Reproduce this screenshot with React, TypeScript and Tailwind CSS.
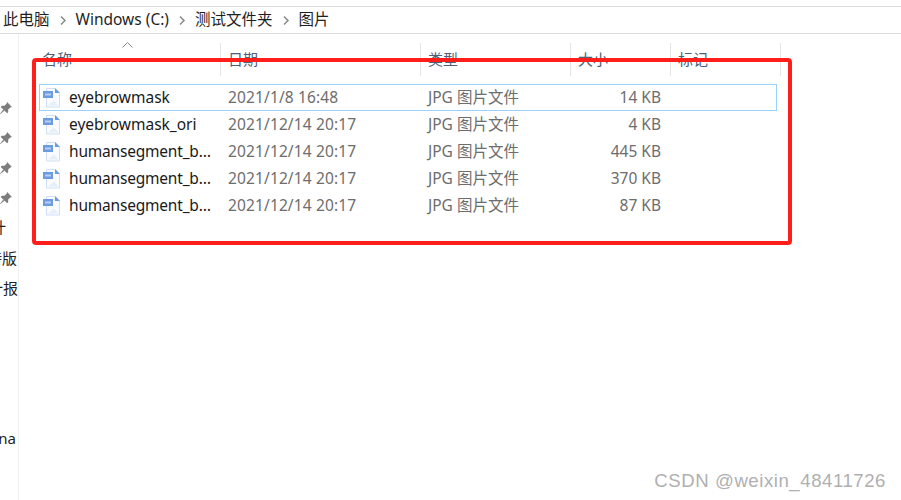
const font = { fontFamily: '"Noto Sans", "Noto Sans CJK SC", sans-serif' };

function FileIcon() {
  return (
    <svg width="20" height="21" viewBox="0 0 20 21" className="shrink-0">
      <path d="M4.5 1.5H13L17.5 6V20H4.5Z" fill="#f9fbfe" stroke="#cfdff4" />
      <path d="M13 1L18 6H13Z" fill="#6b9be2" />
      <path d="M6 18.5L12 13.5L16.5 18.5Z" fill="#e6eff9" />
      <rect x="1" y="4" width="10" height="7" fill="#6b9be2" />
      <rect x="3" y="6.5" width="6" height="2" fill="#b9d0f2" />
    </svg>
  );
}

function Pin() {
  return (
    <svg width="15" height="15" viewBox="0 0 14 14" fill="#7d7d7d">
      <path d="M8.5 1L13 5.5L11.5 6L9.5 8L9.5 10.5L8.5 11.5L2.5 5.5L3.5 4.5L6 4.5L8 2.5Z" />
      <path d="M5 8L1 13L6 9Z" />
    </svg>
  );
}

function Chevron() {
  return (
    <svg width="8" height="11" viewBox="0 0 8 11" fill="none" stroke="#8a8a8a" strokeWidth="1.5" className="mx-[9px]">
      <path d="M2 1.5L6 5.5L2 9.5" />
    </svg>
  );
}

const rows = [
  ["eyebrowmask", "2021/1/8 16:48", "14 KB"],
  ["eyebrowmask_ori", "2021/12/14 20:17", "4 KB"],
  ["humansegment_b…", "2021/12/14 20:17", "445 KB"],
  ["humansegment_b…", "2021/12/14 20:17", "370 KB"],
  ["humansegment_b…", "2021/12/14 20:17", "87 KB"],
];

const headers: [string, string][] = [
  ["名称", "w-[202px]"],
  ["日期", "w-[200px]"],
  ["类型", "w-[150px]"],
  ["大小", "w-[100px]"],
  ["标记", "w-[110px]"],
];

export default function App() {
  return (
    <div className="relative w-[901px] h-[500px] bg-white overflow-hidden pt-[6px]" style={font}>
      <div className="h-[28px] border-y border-[#dcdcdc] flex items-center pl-[3px] text-[15.5px] text-[#1f1f1f]">
        <span>此电脑</span>
        <Chevron />
        <span>Windows (C:)</span>
        <Chevron />
        <span>测试文件夹</span>
        <Chevron />
        <span>图片</span>
      </div>
      <div className="flex h-[466px]">
        <aside className="w-[19px] shrink-0 border-r border-[#f0f0f0] text-[15px] text-[#1f1f1f] relative overflow-hidden">
          <div className="absolute left-[-2px] top-[67px] flex flex-col gap-[15px]">
            <Pin />
            <Pin />
            <Pin />
            <Pin />
          </div>
          <div className="absolute right-[12px] top-[183px] whitespace-nowrap leading-[20px]">计</div>
          <div className="absolute right-[1px] top-[214px] whitespace-nowrap leading-[20px]">特版</div>
          <div className="absolute right-[0px] top-[244px] whitespace-nowrap leading-[20px]">计报</div>
          <div className="absolute right-[2px] top-[394px] whitespace-nowrap leading-[20px]">na</div>
        </aside>
        <main className="flex-1 min-w-0">
          <div className="relative flex mt-[9px] h-[33px] text-[15px] text-[#4c607a]">
            <svg width="11" height="6" viewBox="0 0 11 6" fill="none" stroke="#8a8a8a" className="absolute left-[103px] top-[-1px]">
              <path d="M0.5 5.5L5.5 0.5L10.5 5.5" />
            </svg>
            {headers.map(([label, w], i) => (
              <div key={label} className={`${w} border-r border-[#e5e5e5] flex items-center ${i === 0 ? "pl-[23px]" : "pl-[7px]"}`}>
                {label}
              </div>
            ))}
          </div>
          <div className="ml-[20px] mt-[8px] w-[738px] text-[15.5px] text-[#6d6d6d]">
            {rows.map(([name, date, size], i) => (
              <div
                key={i}
                className={`flex items-center h-[27px] border ${i === 0 ? "border-[#99d1ff]" : "border-transparent"}`}
              >
                <div className="w-[188px] flex items-center pl-[2px] gap-[7px] text-[#1a1a1a]">
                  <FileIcon />
                  <span className={`whitespace-nowrap ${i >= 2 ? "tracking-[-0.2px]" : ""}`}>{name}</span>
                </div>
                <div className="w-[200px] whitespace-nowrap tracking-[0.13px]">{date}</div>
                <div className="w-[150px] whitespace-nowrap">JPG 图片文件</div>
                <div className="w-[83px] text-right whitespace-nowrap">{size}</div>
              </div>
            ))}
          </div>
        </main>
      </div>
      <div className="absolute left-[32px] top-[58px] w-[760px] h-[187px] border-[4px] border-[#ff1f1a] rounded-[4px] pointer-events-none" />
      <div className="absolute right-[15px] top-[469px] text-[18.6px] leading-[24px] tracking-[0.55px] text-[#b0b0b0]" style={{ fontFamily: '"Liberation Sans", sans-serif' }}>
        CSDN @weixin_48411726
      </div>
    </div>
  );
}
